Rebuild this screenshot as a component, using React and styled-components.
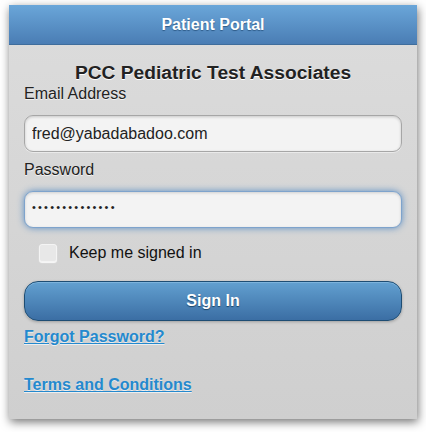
import React from "react";
import styled, { createGlobalStyle } from "styled-components";

const GlobalStyle = createGlobalStyle`
  html, body {
    margin: 0;
    padding: 0;
    background: #ffffff;
    font-family: "Liberation Sans", Arial, Helvetica, sans-serif;
  }
`;

const Page = styled.div`
  padding: 5px 0 0 9px;
  width: 426px;
  height: 432px;
  box-sizing: border-box;
`;

const Panel = styled.div`
  width: 408px;
  height: 414px;
  display: flex;
  flex-direction: column;
  background: linear-gradient(#dcdcdc, #cfcfcf);
  box-shadow: 1px 3px 9px rgba(0, 0, 0, 0.55);
`;

const Header = styled.div`
  height: 40px;
  display: flex;
  align-items: center;
  justify-content: center;
  background: linear-gradient(#6aa6d9, #4a7db4);
  border-bottom: 1px solid #3f6d9c;
  box-sizing: border-box;
  color: #fff;
  font-weight: bold;
  font-size: 16px;
  text-shadow: 0 1px 1px #2d5a87;
`;

const Body = styled.div`
  display: flex;
  flex-direction: column;
  padding: 17px 15px 0;
`;

const OrgName = styled.h3`
  margin: 0;
  text-align: center;
  font-size: 19.2px;
  line-height: 22px;
  font-weight: bold;
  color: #222;
  text-shadow: 0 1px 0 #fff;
`;

const Label = styled.label`
  display: block;
  font-size: 16px;
  line-height: 20px;
  color: #222;
  text-shadow: 0 1px 0 #f2f2f2;
  margin-top: ${(p) => p.$top || 0}px;
`;

const Input = styled.input`
  display: block;
  margin-top: 11px;
  width: 378px;
  height: 37px;
  box-sizing: border-box;
  padding: 0 7px;
  border-radius: 9px;
  font-family: inherit;
  font-size: 16px;
  color: #222;
  background: #f3f3f3;
  outline: none;
  border: 1px solid #a6a6a6;
  box-shadow: inset 0 1px 3px rgba(0, 0, 0, 0.18), 0 1px 0 #eaeaea;

  &[type="password"] {
    font-size: 11px;
    letter-spacing: 2.2px;
    padding-bottom: 5px;
  }

  ${(p) =>
    p.$focused &&
    `
    border-color: #7ea3cc;
    box-shadow: 0 0 7px #5d8fc4, inset 0 1px 3px rgba(0,0,0,0.15);
  `}
`;

const CheckRow = styled.div`
  display: flex;
  align-items: center;
  height: 26px;
  margin-top: 12px;
  padding-left: 15px;
  gap: 12px;
`;

const Box = styled.span`
  width: 18px;
  height: 18px;
  box-sizing: border-box;
  border-radius: 3px;
  background: #e8e8e8;
  border: 1px solid #f4f4f4;
  box-shadow: 0 1px 1px #fafafa;
`;

const CheckText = styled.span`
  font-size: 16px;
  color: #111;
`;

const Button = styled.button`
  margin-top: 15px;
  width: 378px;
  height: 40px;
  border-radius: 14px;
  border: 1px solid #1e4d73;
  background: linear-gradient(#62a0d0, #3b6ea4);
  color: #fff;
  font-family: inherit;
  font-weight: bold;
  font-size: 16px;
  text-shadow: 0 1px 1px #1d4567;
  box-shadow: 0 1px 3px rgba(0, 0, 0, 0.25), inset 0 1px 0 #7db3dc;
`;

const Link = styled.a`
  display: block;
  align-self: flex-start;
  margin-top: ${(p) => p.$top}px;
  font-size: 16px;
  line-height: 20px;
  font-weight: bold;
  color: #2489ce;
  text-decoration: underline;
  text-shadow: 0 1px 0 #eee;
`;

export default function App() {
  return (
    <>
      <GlobalStyle />
      <Page>
        <Panel>
          <Header>Patient Portal</Header>
          <Body>
            <OrgName>PCC Pediatric Test Associates</OrgName>
            <Label>Email Address</Label>
            <Input type="text" defaultValue="fred@yabadabadoo.com" />
            <Label $top={8}>Password</Label>
            <Input type="password" defaultValue="fredfredfred12" $focused />
            <CheckRow>
              <Box />
              <CheckText>Keep me signed in</CheckText>
            </CheckRow>
            <Button>Sign In</Button>
            <Link href="#" $top={6}>
              Forgot Password?
            </Link>
            <Link href="#" $top={28}>
              Terms and Conditions
            </Link>
          </Body>
        </Panel>
      </Page>
    </>
  );
}
